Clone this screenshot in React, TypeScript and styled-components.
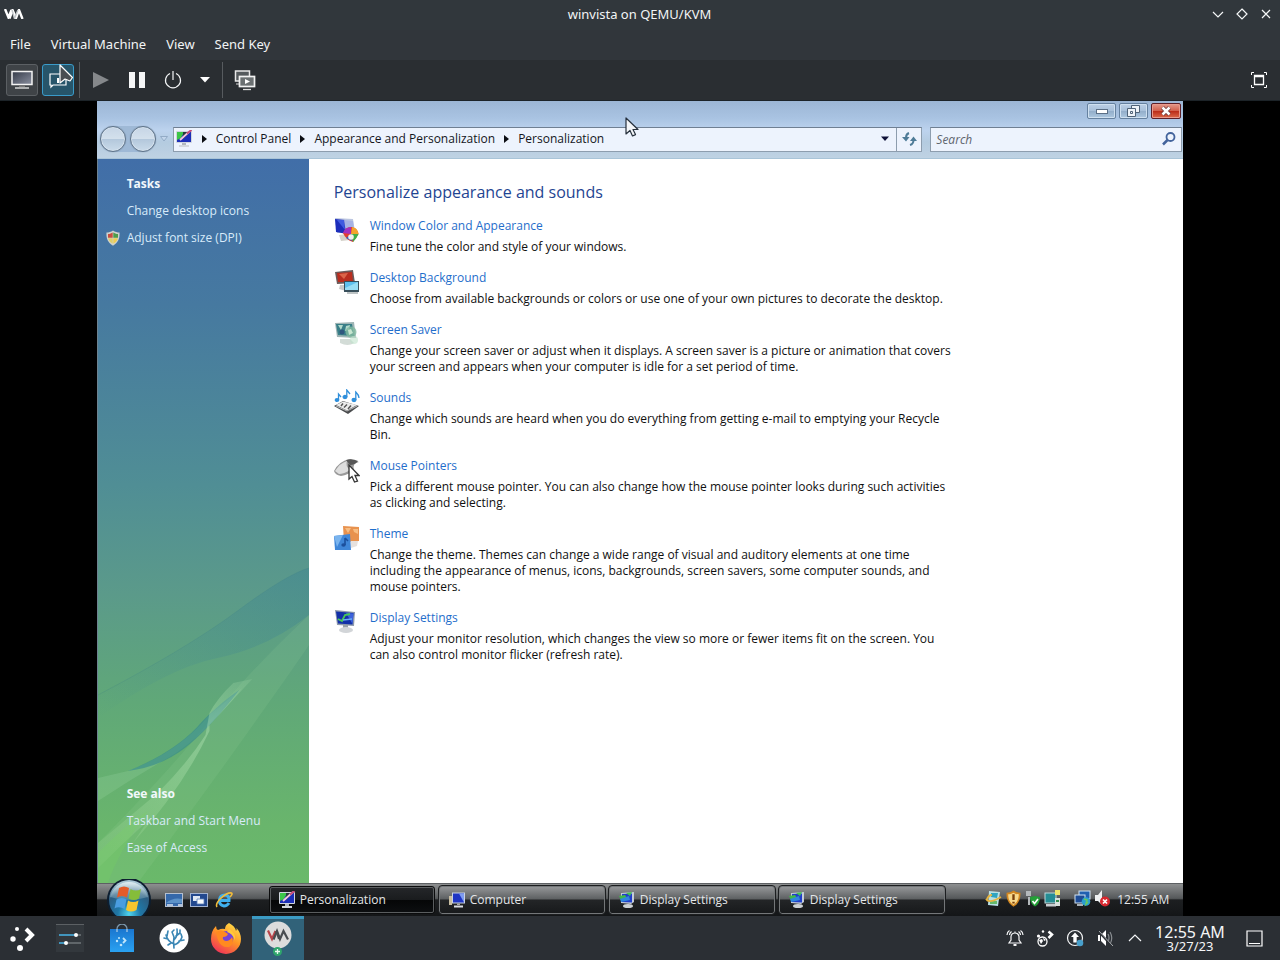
import React from 'react';
import styled, { createGlobalStyle } from 'styled-components';

const GlobalStyle = createGlobalStyle`
    * {
        box-sizing: border-box;
    }
    body {
        margin: 0;
        background: #000;
        font-family: "Noto Sans", sans-serif;
    }
    button, input {
        font: inherit;
        color: inherit;
        border: 0;
        padding: 0;
        margin: 0;
        background: none;
    }
    a {
        color: inherit;
        text-decoration: none;
    }
    svg {
        display: block;
        flex: none;
    }
`;

const Desktop = styled.div`
    display: flex;
    flex-direction: column;
    height: 100vh;
    overflow: hidden;
`;

/* ---------- host window ---------- */

const HostTitle = styled.header`
    position: relative;
    display: flex;
    align-items: center;
    justify-content: space-between;
    flex: none;
    height: 30px;
    padding: 0 7px 2px 4px;
    background: #31373c;
    color: #f2f4f5;
    font-size: 13px;
`;

const HostName = styled.h1`
    margin: 0;
    font-size: 13px;
    font-weight: 400;
    line-height: 20px;
`;

const HostControls = styled.div`
    display: flex;
    gap: 10px;
`;

const LogoArea = styled.div`
    width: 64px;
`;

const MenuBar = styled.nav`
    display: flex;
    align-items: center;
    flex: none;
    gap: 20px;
    height: 30px;
    padding: 0 10px 2px;
    background: #31363b;
    color: #f2f4f5;
    font-size: 13px;
`;

const ToolBar = styled.div`
    position: relative;
    display: flex;
    align-items: center;
    flex: none;
    height: 41px;
    padding: 0 6px;
    background: #2a2e32;
    border-bottom: 1px solid #1c2328;
`;

const ToolButton = styled.button<{ $look?: 'framed' | 'active'; $width?: number }>`
    display: flex;
    align-items: center;
    justify-content: center;
    width: ${p => p.$width || 32}px;
    height: 32px;
    margin-right: ${p => (p.$look ? 4 : 0)}px;
    border-radius: 3px;
    border: 1px solid ${p => (p.$look === 'active' ? '#3a9bc9' : p.$look ? '#5c6064' : 'transparent')};
    background: ${p => (p.$look === 'active' ? '#27556a' : p.$look ? '#3f4347' : 'transparent')};
`;

const Separator = styled.span`
    width: 1px;
    height: 36px;
    margin: 0 5px 0 1px;
    background: #575b5f;
`;

const Spacer = styled.div`
    flex: 1;
`;

const Pointer = styled.svg<{ $x: number; $y: number }>`
    position: absolute;
    left: ${p => p.$x}px;
    top: ${p => p.$y}px;
    z-index: 5;
    pointer-events: none;
`;

const Viewer = styled.main`
    display: flex;
    justify-content: center;
    flex: 1;
    min-height: 0;
    background: #000;
`;

/* ---------- guest ---------- */

const Guest = styled.div`
    display: flex;
    flex-direction: column;
    height: 100%;
    aspect-ratio: 4 / 3;
    font-family: "Open Sans", "Noto Sans", sans-serif;
    font-size: 12px;
    background: #fff;
`;

const Chrome = styled.header`
    position: relative;
    flex: none;
    background: linear-gradient(#9cb6d5, #a9c3e2 30%, #bdd3ee 52%, #b4cbe0 72%, #bfd2e3);
    border-bottom: 1px solid #a9c4d8;
`;

const Caption = styled.div`
    display: flex;
    justify-content: flex-end;
    gap: 3px;
    height: 19px;
    padding: 2px 2px 0 0;
`;

const CaptionButton = styled.button<{ $close?: boolean }>`
    display: flex;
    align-items: center;
    justify-content: center;
    width: ${p => (p.$close ? 30 : 29)}px;
    height: 16px;
    border: 1px solid ${p => (p.$close ? '#5d2028' : '#65819f')};
    border-radius: 2px;
    box-shadow: inset 0 0 0 1px ${p => (p.$close ? '#e99a8c' : '#cfe0f0')};
    background: ${p => (p.$close
        ? 'linear-gradient(#e29a8c, #d2604c 48%, #bb2c18 52%, #dc6a4a)'
        : 'linear-gradient(#bcd0e6, #a8c0da 48%, #93aeca 52%, #adc8e0)')};
`;

const NavRow = styled.div`
    display: flex;
    align-items: center;
    height: 38px;
    padding: 0 1px 0 3px;
`;

const NavPair = styled.div`
    display: flex;
    gap: 4px;
    border-radius: 13px;
    background: #9fb9d6;
`;

const RoundButton = styled.button`
    width: 26px;
    height: 26px;
    border: 1px solid #5f7388;
    border-radius: 50%;
    box-shadow: inset 0 0 0 1px #d6e2ee, 0 0 1px #6d8299;
    background: linear-gradient(#c6d5e6, #d3e0ec 48%, #b4c8dc 52%, #cadbea);
`;

const HistoryButton = styled.button`
    display: flex;
    justify-content: center;
    width: 17px;
`;

const MenuButton = styled(HistoryButton)`
    width: 22px;
`;

const AddressBar = styled.div`
    display: flex;
    align-items: center;
    flex: 1;
    height: 25px;
    border: 1px solid #8d9dae;
    border-top-color: #6f7f92;
    background: #edf3fd;
    padding-left: 1px;
`;

const Crumb = styled.a`
    display: flex;
    align-items: center;
    gap: 9px;
    margin-left: 9px;
    line-height: 20px;
    color: #14161c;
    white-space: nowrap;
`;

const RefreshButton = styled.button`
    display: flex;
    align-items: center;
    justify-content: center;
    width: 25px;
    height: 23px;
    border-left: 1px solid #8d9dae;
`;

const SearchBox = styled.label`
    display: flex;
    align-items: center;
    width: 252px;
    height: 25px;
    margin-left: 8px;
    padding: 0 5px;
    border: 1px solid #8d9dae;
    border-top-color: #6f7f92;
    background: #edf3fd;
`;

const SearchInput = styled.input`
    flex: 1;
    min-width: 0;
    outline: none;
    &::placeholder {
        color: #5f656e;
        font-style: italic;
        opacity: 1;
    }
`;

const Body = styled.div`
    display: flex;
    flex: 1;
    min-height: 0;
`;

const Sidebar = styled.aside`
    position: relative;
    display: flex;
    flex-direction: column;
    justify-content: space-between;
    flex: none;
    width: 212px;
    padding: 11px 8px 22px 7px;
    border-left: 1px solid #6d8290;
    background: linear-gradient(#416ea8, #4679a0 20%, #508e95 45%, #5b9a8a 60%, #60a878 75%, #69b56c 92%, #6ab96a);
    color: #d8ebfa;
`;

const Swoosh = styled.svg`
    position: absolute;
    left: 0;
    bottom: 0;
    width: 100%;
    height: 330px;
`;

const LinkGroup = styled.nav`
    position: relative;
    display: flex;
    flex-direction: column;
`;

const SideTitle = styled.h2`
    margin: 0;
    padding-left: 22px;
    font-size: 12px;
    font-weight: 700;
    line-height: 27px;
    color: #f2f8fc;
`;

const SideLink = styled.a`
    display: flex;
    align-items: center;
    gap: 6px;
    line-height: 27px;
`;

const IconSlot = styled.span`
    display: flex;
    width: 16px;
`;

const Content = styled.section`
    flex: 1;
    min-width: 0;
    padding: 21px 25px;
    background: #fff;
`;

const Heading = styled.h2`
    margin: 0 0 9px;
    font-size: 16px;
    font-weight: 400;
    line-height: 24px;
    color: #1f4592;
`;

const Entry = styled.article`
    display: flex;
    align-items: flex-start;
    gap: 10px;
    max-width: 618px;
    margin-bottom: 10px;
    > svg {
        margin-top: 4px;
    }
`;

const EntryTitle = styled.a`
    display: block;
    line-height: 26px;
    color: #1f6ecb;
`;

const EntryText = styled.p`
    margin: 0;
    line-height: 16px;
    color: #101010;
`;

const GuestBar = styled.footer`
    position: relative;
    display: flex;
    align-items: center;
    flex: none;
    height: 33px;
    padding: 0 14px 0 8px;
    border-top: 1px solid #5d6063;
    background: linear-gradient(#8d8f90, #55585a 45%, #1d1f21 50%, #141618);
    color: #e4e6e8;
`;

const StartButton = styled.button`
    align-self: flex-end;
    flex: none;
    width: 48px;
    height: 37px;
    overflow: hidden;
`;

const QuickLaunch = styled.div`
    display: flex;
    gap: 7px;
    width: 104px;
    margin-left: 12px;
`;

const TaskList = styled.div`
    display: flex;
    gap: 4px;
`;

const TaskButton = styled.button<{ $active?: boolean }>`
    display: flex;
    align-items: center;
    gap: 4px;
    width: 166px;
    height: 28px;
    padding-left: 8px;
    border: 1px solid ${p => (p.$active ? '#0b0c0d' : '#747779')};
    outline: 1px solid ${p => (p.$active ? '#5a5d5f' : '#1c1e20')};
    outline-offset: ${p => (p.$active ? -2 : 0)}px;
    border-radius: 3px;
    background: ${p => (p.$active
        ? 'linear-gradient(#25272a, #1a1c1e 48%, #050607 52%, #0d0f11)'
        : 'linear-gradient(#939597, #5d6062 46%, #232527 50%, #181a1c)')};
    line-height: 20px;
`;

const GuestTray = styled.div`
    display: flex;
    align-items: center;
    gap: 3px;
    margin-left: auto;
    > svg {
        margin-bottom: 3px;
    }
`;

const Gap = styled.span`
    width: 7px;
`;

const GuestClock = styled.time`
    margin-left: 3px;
    line-height: 20px;
`;

/* ---------- host panel ---------- */

const Panel = styled.footer`
    display: flex;
    align-items: stretch;
    flex: none;
    height: 44px;
    padding-right: 11px;
    background: #2b2f34;
    color: #f5f6f7;
`;

const Launcher = styled.button<{ $width?: number; $active?: boolean }>`
    display: flex;
    align-items: center;
    justify-content: center;
    flex: none;
    width: ${p => p.$width || 52}px;
    box-shadow: inset 0 3px ${p => (p.$active ? '#3b9bc4' : 'transparent')};
    background: ${p => (p.$active ? '#316279' : 'transparent')};
`;

const TrayButton = styled.button`
    display: flex;
    align-items: center;
    justify-content: center;
    width: 30px;
`;

const PanelClock = styled.time`
    display: flex;
    flex-direction: column;
    align-items: center;
    justify-content: center;
    width: 80px;
    margin-right: 9px;
    font-size: 16px;
    line-height: 16px;
    small {
        font-size: 13px;
        line-height: 12px;
    }
`;

/* ---------- icons ---------- */

const Arrow = ({ x, y, dark }: { x: number; y: number; dark?: boolean }) => (
    <Pointer $x={x} $y={y} width="16" height="22" viewBox="0 0 16 22">
        <path
            d={dark ? 'M2 1V19L7 15L12 17L14.500 13.500Z' : 'M1 1V17L5 13.500L7.500 19L10.500 17.600L8 12.500H13Z'}
            fill={dark ? '#4a4e52' : '#f4f6f9'}
            stroke={dark ? '#fff' : '#26303c'}
            strokeWidth="1.200"
            strokeLinejoin="round"
        />
    </Pointer>
);

const VmmMark = ({ width, red }: { width: number; red?: boolean }) => (
    <svg width={width} height={width / 2} viewBox="0 0 20 10" fill="none" strokeWidth="2.400">
        <path d="M1 0L4.500 8.500L7.500 1" stroke={red ? '#b8434a' : '#fff'} />
        <path d="M5.500 9.500L8.500 1L12 9L15 1L18.500 10" stroke={red ? '#4b4f52' : '#fff'} />
        <path d="M8 1L10.500 9.500L14 1" stroke={red ? '#4b4f52' : '#c4c9cc'} strokeWidth="1.500" />
    </svg>
);

const Stroke = ({ d, size = 14, box = 14 }: { d: string; size?: number; box?: number }) => (
    <svg width={size} height={size} viewBox={`0 0 ${box} ${box}`} fill="none" stroke="#f5f7f8" strokeWidth="1.200">
        <path d={d} />
    </svg>
);

const ConsoleIcon = () => (
    <svg width="22" height="20" viewBox="0 0 22 20">
        <defs>
            <linearGradient id="con" x1="0" y1="0" x2="1" y2="1">
                <stop offset="0" stopColor="#343a48" />
                <stop offset="1" stopColor="#8b90a0" />
            </linearGradient>
        </defs>
        <rect x="1" y="1.500" width="20" height="13" fill="url(#con)" stroke="#f3f3f3" strokeWidth="1.500" />
        <path d="M8 15.500H14V17H8Z" fill="#777" />
        <path d="M4 18H18" stroke="#d4d4d4" strokeWidth="1.500" />
    </svg>
);

const DetailsIcon = () => (
    <svg width="20" height="18" viewBox="0 0 20 18" fill="none" stroke="#fff" strokeWidth="1.200">
        <path d="M2 3H18V14H5L3 16V14H2Z" />
        <path d="M10 7V12" strokeWidth="2" />
    </svg>
);

const ScreensIcon = () => (
    <svg width="22" height="22" viewBox="0 0 22 22">
        <rect x="1.500" y="2" width="14" height="10" fill="#555a5d" stroke="#e8e8e8" strokeWidth="1.500" />
        <path d="M2 15H5" stroke="#ddd" />
        <rect x="5.500" y="7.500" width="15" height="10" fill="#6b7072" stroke="#f2f2f2" strokeWidth="1.700" />
        <path d="M11 10L16 12.500L11 15Z" fill="#fff" />
        <path d="M9 20.500H17" stroke="#ddd" strokeWidth="1.300" />
    </svg>
);

const Shield = ({ kind = 'uac', size = 16 }: { kind?: 'uac' | 'warn'; size?: number }) => (
    <svg width={size} height={size} viewBox="0 0 16 16">
        <path d="M8 .500C10 2 12.500 2.500 14.500 2.500C15 8 13 13 8 15.700C3 13 1 8 1.500 2.500C3.500 2.500 6 2 8 .500Z" fill={kind === 'warn' ? '#d3861f' : '#cfd2cd'} />
        {kind === 'warn' ? (
            <>
                <path d="M8 2.500C10 3.700 11.500 4 13 4C13 8.500 11.500 12 8 14C4.500 12 3 8.500 3 4C4.500 4 6 3.700 8 2.500Z" fill="#f8d98c" />
                <path d="M8 4V9.500M8 11V12.700" stroke="#7a3d08" strokeWidth="2.200" />
            </>
        ) : (
            <>
                <path d="M7.700 2.500V7.700H3L3 4C5 4 6.500 3.300 7.700 2.500Z" fill="#c84d3e" />
                <path d="M8.300 2.500V7.700H13L13 4C11 4 9.500 3.300 8.300 2.500Z" fill="#4f9c4a" />
                <path d="M7.700 8.300V13.700C5 12.500 3.500 10.500 3.200 8.300Z" fill="#e0cf6a" />
                <path d="M8.300 8.300V13.700C11 12.500 12.500 10.500 12.800 8.300Z" fill="#f0ce52" />
            </>
        )}
    </svg>
);

const PersonalizeIcon = ({ size = 18 }: { size?: number }) => (
    <svg width={size} height={size} viewBox="0 0 18 18">
        <rect x="1" y="1" width="16" height="12" rx="1" fill="#cfd5de" />
        <rect x="2" y="2" width="14" height="10" fill="#1c2fb8" />
        <path d="M2 2H9L6 8L2 10Z" fill="#3cc648" />
        <path d="M8 2H15L8 9Z" fill="#253a3a" />
        <path d="M5 10L15 1" stroke="#f4c4e0" strokeWidth="1.800" />
        <path d="M12 3.500L16.500 0" stroke="#c44a78" strokeWidth="2" />
        <path d="M7 13H11V15H7Z" fill="#b0b6be" />
        <path d="M4 16H14" stroke="#d3d8de" strokeWidth="2" />
    </svg>
);

const ComputerIcon = () => (
    <svg width="18" height="18" viewBox="0 0 18 18">
        <path d="M1 5H4V14H1Z" fill="#c9bea2" />
        <rect x="4" y="1.500" width="13" height="11" fill="#c9d3e4" />
        <rect x="5" y="2.500" width="11" height="9" fill="#1f35c4" />
        <path d="M11 2.500H16V11.500Z" fill="#7f9cf0" />
        <path d="M9 12.500H12V14H9Z" fill="#aaa" />
        <path d="M6 15.500H15" stroke="#dcdfe4" strokeWidth="2" />
    </svg>
);

const DisplayIcon = ({ size = 18 }: { size?: number }) => (
    <svg width={size} height={size} viewBox="0 0 18 18">
        <path d="M3 2L16 1V11L13 13L3 12Z" fill="#c4ccd8" />
        <path d="M4 3L14 2.500V11.500L4 11Z" fill="#203fc9" />
        <path d="M1 5L7 4L9 7L3 9Z" fill="#3eb84a" />
        <path d="M2 8L11 5L12 9L3 11Z" fill="#2f87dc" />
        <path d="M8 2L14 1L12 5Z" fill="#45c253" />
        <ellipse cx="10" cy="15" rx="5" ry="2" fill="#ced3d6" />
    </svg>
);

const StartOrb = () => (
    <svg width="48" height="37" viewBox="0 0 48 37">
        <defs>
            <radialGradient id="orb" cx=".5" cy=".85" r=".8">
                <stop offset="0" stopColor="#4fd6f0" />
                <stop offset=".35" stopColor="#1f78a8" />
                <stop offset=".75" stopColor="#2c5c80" />
                <stop offset="1" stopColor="#a8c6d4" />
            </radialGradient>
            <linearGradient id="gloss" x1="0" y1="0" x2="0" y2="1">
                <stop offset="0" stopColor="#e2eef2" />
                <stop offset="1" stopColor="#8db2c2" stopOpacity=".3" />
            </linearGradient>
        </defs>
        <circle cx="24" cy="21" r="22" fill="#0d1e30" />
        <circle cx="24" cy="21" r="20" fill="url(#orb)" />
        <path d="M5 18A19.500 19.500 0 0 1 43 18Q24 24 5 18Z" fill="url(#gloss)" />
        <path d="M14 9Q19 6 24 9L22 18.500Q17 15.500 12 18.500Z" fill="#e45b28" />
        <path d="M25.500 10Q31 13 36 10L34 19.500Q29 22.500 23.500 19.500Z" fill="#85bd3a" />
        <path d="M11.500 20.500Q17 17.500 21.500 20.500L19.500 30Q14 27 9.500 29.500Z" fill="#4a9de0" />
        <path d="M23 21.500Q28 24.500 33.500 21.500L31.500 31Q26 34 21 31Z" fill="#f7c52f" />
    </svg>
);

const ShowDesktopIcon = () => (
    <svg width="18" height="16" viewBox="0 0 18 16">
        <rect x=".5" y="1.500" width="17" height="13" fill="#3568aa" stroke="#b4bfd0" />
        <path d="M1 11Q8 5 17 7V11H1Z" fill="#5c92c8" />
        <path d="M2 13H8M13 13H17" stroke="#dbe4ee" strokeWidth="1.500" />
    </svg>
);

const SwitchIcon = () => (
    <svg width="18" height="16" viewBox="0 0 18 16">
        <rect x=".5" y="1.500" width="17" height="13" fill="#23498f" stroke="#a3b3d0" />
        <path d="M3 4H10V9H3Z" fill="#dfe8f4" />
        <path d="M7 7H14V12H7Z" fill="#f7fafc" stroke="#5b7db8" strokeWidth=".8" />
    </svg>
);

const ExplorerIcon = () => (
    <svg width="18" height="18" viewBox="0 0 18 18" fill="none">
        <path d="M14 12Q12 15 9 15Q4 14 4.500 9Q5 4 10 4Q14.500 4.500 14 9.500H6" stroke="#3fb0ee" strokeWidth="3" />
        <path d="M2 16Q0 13 6 7Q13 1 16.500 2Q18 3 15 6" stroke="#f2bd3a" strokeWidth="1.600" />
    </svg>
);

const GuestTrayIcons = () => (
    <>
        <svg width="17" height="17" viewBox="0 0 17 17">
            <path d="M4 1L15 2L13 16L3 15Z" fill="#b9e0e4" />
            <path d="M6 3H13L12 8L6 7Z" fill="#2fa4c0" />
            <path d="M5 11H12V14H5Z" fill="#64b96c" />
            <path d="M1 9Q4 14 16 7M2 9Q4 5 7 5" stroke="#e6b440" strokeWidth="1.800" fill="none" />
        </svg>
        <Shield kind="warn" size={17} />
        <svg width="16" height="17" viewBox="0 0 16 17">
            <path d="M1 1H6V6H1ZM3 7H5V15H3Z" fill="#b4b9bb" />
            <path d="M5 7L10 6L15 7Q15 14 10 16.500Q5 14 5 7Z" fill="#25a038" />
            <path d="M7.500 11L9.500 13.500L13 9" stroke="#fff" strokeWidth="1.600" fill="none" />
        </svg>
        <svg width="17" height="17" viewBox="0 0 17 17">
            <rect x="1" y="3" width="11" height="10" fill="#268d94" stroke="#bfd8da" />
            <path d="M2 14H12V16.500H2Z" fill="#c9cdd0" />
            <path d="M11 0H16V5H11Z" fill="#efe66c" />
            <path d="M11 8H16V16H11Z" fill="#d8e0dc" />
            <path d="M12 10H15V12H12Z" fill="#338c48" />
        </svg>
        <Gap />
        <svg width="17" height="17" viewBox="0 0 17 17">
            <rect x="5" y="1" width="11" height="8" fill="#2160b0" stroke="#cfe2f2" />
            <rect x="1" y="5" width="10" height="8" fill="#1d4c96" stroke="#cfe2f2" />
            <path d="M3 15H9" stroke="#dbe3ea" strokeWidth="1.500" />
            <circle cx="12" cy="11.500" r="4.300" fill="#2b9fd0" />
            <path d="M10 9L13 10L12 14L14 12" stroke="#69c95c" strokeWidth="1.500" fill="none" />
        </svg>
        <svg width="17" height="17" viewBox="0 0 17 17">
            <path d="M1 5H4L8 0V15L4 11H1Z" fill="#eef0f1" />
            <circle cx="11" cy="11.500" r="5" fill="#d8272e" />
            <path d="M9 9.500L13 13.500M13 9.500L9 13.500" stroke="#fff" strokeWidth="1.700" />
        </svg>
    </>
);

const WindowColorIcon = () => (
    <svg width="26" height="26" viewBox="0 0 26 26">
        <path d="M1 1L19 2L21 15L3 16Z" fill="#bcc6e0" />
        <path d="M1 2L11 3L13 17L2 15Z" fill="#1c2dbb" />
        <path d="M3 3L10 3L11 13Z" fill="#3f5ae0" />
        <path d="M10 3L19 4L20 14L12 16Z" fill="#a6b2e4" />
        <path d="M5 18L13 17L16 23L7 24Z" fill="#d4d2ca" />
        <path d="M9 16Q12 9 18 10Q24 12 24.500 17Q22 21 19 25Q12 23 9 16Z" fill="#e23d30" />
        <path d="M17 17L9 16Q11 10 17 10Z" fill="#a12fc0" />
        <path d="M17 17L18 10Q24 11 24.500 17Z" fill="#f3a42c" />
        <path d="M17 17H24.500Q23 21 19 25Z" fill="#3fae4a" />
        <path d="M17 17L18 24L12 21Z" fill="#2f60cc" />
        <circle cx="17" cy="20" r="2.800" fill="#f0efec" />
    </svg>
);

const BackgroundIcon = () => (
    <svg width="26" height="26" viewBox="0 0 26 26">
        <path d="M1 3L19 1L21 14L3 15Z" fill="#6b5a5a" />
        <path d="M3 4L18 3L19 13L4 13Z" fill="#b92d1f" />
        <path d="M5 5L14 4L10 10Z" fill="#dc6448" />
        <path d="M6 16H12V22L5 20Z" fill="#c9c9c9" />
        <rect x="10" y="12" width="15" height="11" fill="#39505c" />
        <rect x="11" y="13" width="13" height="8" fill="#5fc0ee" />
        <path d="M11 19L24 13V21H11Z" fill="#99def6" />
        <path d="M13 24H24" stroke="#a9b0b2" strokeWidth="1.500" />
    </svg>
);

const SaverIcon = () => (
    <svg width="26" height="26" viewBox="0 0 26 26">
        <path d="M1 2L20 1L22 17L3 16Z" fill="#9eb4b4" />
        <path d="M2 3L18 3L20 15L4 14Z" fill="#397f88" />
        <path d="M4 4L9 4L7 9ZM12 5L16 4L15 9L11 10Z" fill="#b3dacb" />
        <circle cx="8" cy="11" r="2.500" fill="#2f567e" />
        <circle cx="17" cy="11" r="5.500" fill="#82baa0" opacity=".8" />
        <path d="M14 9L17 8L19 12L15 14Z" fill="#c7e6d0" />
        <path d="M6 18L16 18L20 22Q14 26 6 22Z" fill="#d3dcd7" />
        <circle cx="20" cy="19" r="4" fill="#bfe2cb" opacity=".6" />
    </svg>
);

const SoundsIcon = () => (
    <svg width="26" height="26" viewBox="0 0 26 26">
        <path d="M0 17L9 12L25 17L14 25Z" fill="#4a4c4e" />
        <path d="M2 16L9 12.500L23 16L13 21.500Z" fill="#ececec" />
        <path d="M9 14.500L7 17M13 15.500L10 18.500M17 16.500L14 20" stroke="#565656" strokeWidth="1.500" />
        <path d="M2 17L13 22L23 17" stroke="#bbb" fill="none" />
        <g fill="#2f8fdb" stroke="#2f8fdb" strokeWidth="1.300">
            <ellipse cx="3" cy="11" rx="1.700" ry="1.300" />
            <path d="M4.500 11V5L7 8" fill="none" />
            <ellipse cx="11" cy="8" rx="1.900" ry="1.500" />
            <path d="M12.800 8V1L16 5" fill="none" />
            <ellipse cx="20" cy="11" rx="1.900" ry="1.500" />
            <path d="M21.800 11V3Q25 6 25 9" fill="none" />
        </g>
    </svg>
);

const MouseIcon = () => (
    <svg width="26" height="26" viewBox="0 0 26 26">
        <path d="M0 14Q5 4 16 2L25 5Q18 6 20 13Q14 18 7 19Q1 18 0 14Z" fill="#9a9a9a" />
        <path d="M1 14Q6 6 13 4Q11 9 16 13Q10 17 5 17Z" fill="#dedede" />
        <path d="M12 3Q18 1 24 4Q21 8 16 8Z" fill="#575757" />
        <path d="M15 8V22L18 19.500L20.500 25L23.500 24L21 18.500H25Z" fill="#fff" stroke="#343434" strokeWidth="1.300" />
    </svg>
);

const ThemeIcon = () => (
    <svg width="26" height="26" viewBox="0 0 26 26">
        <path d="M9 1L25 2V16L10 17Z" fill="#e8924e" />
        <path d="M11 3L17 3L14 8ZM19 4H24V9L20 7Z" fill="#f7bd82" />
        <path d="M0 11L16 9L17 25L1 25Z" fill="#3f86d8" />
        <path d="M0 11L9 10L3 22Z" fill="#7ab4ee" />
        <path d="M11 13V20M11 13L14 16" stroke="#1c4f9c" strokeWidth="1.600" />
        <ellipse cx="9.500" cy="20" rx="2.200" ry="1.700" fill="#1c4f9c" />
        <path d="M17 16L24 16L23 21L17 23Z" fill="#e6e1de" />
    </svg>
);

const SettingsIcon = () => (
    <svg width="26" height="26" viewBox="0 0 26 26">
        <path d="M1 1L21 3L20 17L3 16Z" fill="#8d99ac" />
        <path d="M2 2.500L19.500 4L18.500 15.500L4 14.500Z" fill="#1230a8" />
        <path d="M12 4L19.500 4.500L18.500 15Z" fill="#3c62dc" />
        <path d="M4 10L8 12L11 6L16 5" stroke="#47c656" strokeWidth="1.800" fill="none" />
        <path d="M9 11L18 10" stroke="#68aef4" strokeWidth="1.500" />
        <path d="M9 16H14V20H9Z" fill="#9aa2aa" />
        <ellipse cx="12" cy="21" rx="7" ry="3" fill="#d2d5d8" />
    </svg>
);

const TriRight = () => (
    <svg width="5" height="8" viewBox="0 0 5 8"><path d="M0 0L5 4L0 8Z" fill="#0c0e14" /></svg>
);

const TriDown = ({ color = '#fff', size = 10 }: { color?: string; size?: number }) => (
    <svg width={size} height="6" viewBox="0 0 10 6"><path d="M0 0H10L5 5.500Z" fill={color} /></svg>
);

const LauncherIcon = () => (
    <svg width="28" height="28" viewBox="0 0 28 28">
        <g fill="#fff">
            <circle cx="9" cy="5" r="2" />
            <circle cx="5" cy="15" r="2.700" />
            <circle cx="12" cy="24" r="3" />
        </g>
        <path d="M18 5L24 11L18 17" fill="none" stroke="#fff" strokeWidth="4" />
    </svg>
);

const SlidersIcon = () => (
    <svg width="28" height="28" viewBox="0 0 28 28">
        <rect width="28" height="28" fill="#33383d" />
        <path d="M0 .500H28" stroke="#5c6064" />
        <path d="M3 11H20M3 19H10" stroke="#48b4e8" strokeWidth="1.600" />
        <path d="M20 11H25M10 19H25" stroke="#70757a" strokeWidth="1.600" />
        <circle cx="20" cy="11" r="2" fill="#fff" />
        <circle cx="10" cy="19" r="2" fill="#fff" />
    </svg>
);

const BagIcon = () => (
    <svg width="26" height="28" viewBox="0 0 26 28">
        <defs>
            <linearGradient id="bag" x1="0" y1="0" x2="0" y2="1">
                <stop offset="0" stopColor="#1a76cf" />
                <stop offset="1" stopColor="#2aa2f2" />
            </linearGradient>
        </defs>
        <path d="M8 8V5A5 5 0 0 1 18 5V8" stroke="#7b97ac" strokeWidth="1.300" fill="none" />
        <path d="M1 5H25V28H1Z" fill="url(#bag)" />
        <path d="M8 8V5M18 8V5" stroke="#a9c8e0" strokeWidth="1.300" />
        <g fill="#bfe6fb">
            <circle cx="10" cy="14" r="1" />
            <circle cx="8" cy="17" r="1.200" />
            <circle cx="12" cy="21" r="1.300" />
        </g>
        <path d="M14 14L16.500 16.500L14 19" stroke="#bfe6fb" strokeWidth="1.800" fill="none" />
    </svg>
);

const CoralIcon = () => (
    <svg width="30" height="30" viewBox="0 0 30 30">
        <circle cx="15" cy="15" r="14.500" fill="#fff" />
        <g fill="none" stroke="#3a86b4" strokeWidth="1.600" strokeLinecap="round">
            <path d="M15 25Q14 19 15 14L13 9M15 17Q19 13 18 6M15 21Q9 19 7 12M9 16L5 15M8 13L9 8M17 13L21 10V7M15 22Q21 20 23 14L22 11M20 18L25 17M12 20L9 22M13 9L15 7" />
        </g>
    </svg>
);

const FirefoxIcon = () => (
    <svg width="32" height="32" viewBox="0 0 32 32">
        <defs>
            <linearGradient id="fox" x1=".8" y1="0" x2=".2" y2="1">
                <stop offset="0" stopColor="#ffe14a" />
                <stop offset=".45" stopColor="#ff9526" />
                <stop offset="1" stopColor="#ee2b5c" />
            </linearGradient>
        </defs>
        <path d="M19 1Q25 4 26 9Q27 8 26.500 6Q31 11 31 17A15 15 0 0 1 1 17Q1 9 6 4Q6 7 8 8Q12 6 15 7Q15 3 19 1Z" fill="url(#fox)" />
        <circle cx="16.500" cy="16" r="7" fill="#7543d6" />
        <path d="M6 10Q11 7 15 10L18 12Q17 15 13 15Q12 18 16 19Q20 19 22 15Q25 22 19 25Q11 26 8 18Z" fill="#ff8a20" />
        <path d="M19 7Q26 11 25 18Q22 11 17 10Z" fill="#ffc93a" />
    </svg>
);

const VmmIcon = () => (
    <svg width="30" height="38" viewBox="0 0 30 38">
        <circle cx="15" cy="16" r="13.500" fill="#dcdcdc" />
        <g fill="none" strokeWidth="2.200">
            <path d="M5 11.500L9 20L12.500 12" stroke="#b8444a" />
            <path d="M10.500 20.500L14 12L17 20L20.500 12L25 20.500" stroke="#484c50" />
            <path d="M13.500 12L16 20" stroke="#484c50" />
        </g>
        <circle cx="14.500" cy="32.500" r="4.500" fill="#2fa66c" />
        <path d="M12 32.500H17M14.500 30V35" stroke="#e9f7ef" strokeWidth="1.300" />
    </svg>
);

const BellIcon = () => (
    <svg width="18" height="18" viewBox="0 0 18 18" fill="none" stroke="#f5f6f7" strokeWidth="1.200">
        <path d="M3 14H15L13 11V7.500Q12.500 4 9 4Q5.500 4 5 7.500V11ZM9 4V2.500" />
        <path d="M7.500 16H10.500" strokeWidth="2" />
        <path d="M3.500 1.500Q1 3 1 6M5.500 2.500Q3.500 4 3.500 6M14.500 1.500Q17 3 17 6M12.500 2.500Q14.500 4 14.500 6" />
    </svg>
);

const GlobeIcon = () => (
    <svg width="18" height="18" viewBox="0 0 18 18">
        <g fill="#fff">
            <circle cx="7" cy="2.500" r="1.200" />
            <circle cx="2.500" cy="7" r="1.600" />
        </g>
        <path d="M12.500 2.500L16 5.500L12.500 9" stroke="#fff" strokeWidth="2.500" fill="none" />
        <circle cx="6.500" cy="12.500" r="4.500" fill="none" stroke="#fff" strokeWidth="1.300" />
        <path d="M3 11L6 10L7 12L5 15ZM7 8.500L10 11L8 12Z" fill="#fff" />
    </svg>
);

const UpdateIcon = () => (
    <svg width="18" height="18" viewBox="0 0 18 18">
        <circle cx="9" cy="9" r="7.500" fill="none" stroke="#f5f6f7" strokeWidth="1.200" />
        <path d="M9 3.500L13 8H10.700V13.500H7.300V8H5Z" fill="#fff" />
        <circle cx="14" cy="14" r="3.300" fill="#48a0cc" />
    </svg>
);

const MuteIcon = () => (
    <svg width="18" height="18" viewBox="0 0 18 18" fill="none">
        <path d="M2 6V12H4V6Z" fill="#fff" />
        <path d="M5 6L10 1V17L5 12Z" fill="#fff" />
        <path d="M12 5Q14 9 12 13M14 3Q17.500 9 14 15" stroke="#888c90" strokeWidth="1.200" />
        <path d="M2 2L16 17" stroke="#2b2f34" strokeWidth="2" />
        <path d="M3 2L17 17" stroke="#a6a9ac" strokeWidth="1" />
    </svg>
);

/* ---------- data ---------- */

const entries = [
    { icon: <WindowColorIcon />, title: 'Window Color and Appearance', text: 'Fine tune the color and style of your windows.' },
    { icon: <BackgroundIcon />, title: 'Desktop Background', text: 'Choose from available backgrounds or colors or use one of your own pictures to decorate the desktop.' },
    { icon: <SaverIcon />, title: 'Screen Saver', text: 'Change your screen saver or adjust when it displays. A screen saver is a picture or animation that covers your screen and appears when your computer is idle for a set period of time.' },
    { icon: <SoundsIcon />, title: 'Sounds', text: 'Change which sounds are heard when you do everything from getting e-mail to emptying your Recycle Bin.' },
    { icon: <MouseIcon />, title: 'Mouse Pointers', text: 'Pick a different mouse pointer. You can also change how the mouse pointer looks during such activities as clicking and selecting.' },
    { icon: <ThemeIcon />, title: 'Theme', text: 'Change the theme. Themes can change a wide range of visual and auditory elements at one time including the appearance of menus, icons, backgrounds, screen savers, some computer sounds, and mouse pointers.' },
    { icon: <SettingsIcon />, title: 'Display Settings', text: 'Adjust your monitor resolution, which changes the view so more or fewer items fit on the screen. You can also control monitor flicker (refresh rate).' },
];

const crumbs = ['Control Panel', 'Appearance and Personalization', 'Personalization'];

const tasks = [
    { icon: <PersonalizeIcon />, label: 'Personalization', active: true },
    { icon: <ComputerIcon />, label: 'Computer' },
    { icon: <DisplayIcon />, label: 'Display Settings' },
    { icon: <DisplayIcon />, label: 'Display Settings' },
];

const HostWindow = () => (
    <>
        <HostTitle>
            <LogoArea><VmmMark width={20} /></LogoArea>
            <HostName>winvista on QEMU/KVM</HostName>
            <HostControls>
                <button aria-label="Minimize"><Stroke d="M2 5L7 10L12 5" /></button>
                <button aria-label="Maximize"><Stroke d="M7 2L12 7L7 12L2 7Z" /></button>
                <button aria-label="Close"><Stroke d="M3 3L11 11M11 3L3 11" /></button>
            </HostControls>
        </HostTitle>
        <MenuBar>
            {['File', 'Virtual Machine', 'View', 'Send Key'].map(name => <button key={name}>{name}</button>)}
        </MenuBar>
        <ToolBar>
            <ToolButton $look="framed" aria-label="Console"><ConsoleIcon /></ToolButton>
            <ToolButton $look="active" aria-label="Details"><DetailsIcon /></ToolButton>
            <Separator />
            <ToolButton aria-label="Run">
                <svg width="16" height="16" viewBox="0 0 16 16"><path d="M0 0L16 8L0 16Z" fill="#85888b" /></svg>
            </ToolButton>
            <ToolButton $width={40} aria-label="Pause">
                <svg width="16" height="16" viewBox="0 0 16 16"><path d="M0 0H6V16H0ZM10 0H16V16H10Z" fill="#f5f6f7" /></svg>
            </ToolButton>
            <ToolButton aria-label="Shut down">
                <Stroke size={18} box={18} d="M6 2.500A7.500 7.500 0 1 0 12 2.500M9 0V9" />
            </ToolButton>
            <ToolButton aria-label="Shut down options"><TriDown /></ToolButton>
            <Separator />
            <ToolButton $width={34} aria-label="Snapshots"><ScreensIcon /></ToolButton>
            <Spacer />
            <ToolButton $width={30} aria-label="Full screen">
                <svg width="16" height="16" viewBox="0 0 16 16" fill="none" stroke="#fff">
                    <path d="M.500 3V.500H3M13 .500H15.500V3M15.500 13V15.500H13M3 15.500H.500V13" />
                    <path d="M3.500 3.500H12.500V12.500H3.500ZM3 4.500H13" strokeWidth="1.300" />
                </svg>
            </ToolButton>
            <Arrow x={58} y={4} dark />
        </ToolBar>
    </>
);

const Explorer = () => (
    <>
        <Chrome>
            <Caption>
                <CaptionButton aria-label="Minimize window">
                    <svg width="12" height="6" viewBox="0 0 12 6"><rect x=".5" y="1.500" width="11" height="4" fill="#fff" stroke="#5b6f86" /></svg>
                </CaptionButton>
                <CaptionButton aria-label="Restore window">
                    <svg width="13" height="12" viewBox="0 0 13 12" fill="#eef3f8" stroke="#4f6378">
                        <path d="M4.500 .500H12.500V7.500H4.500Z" />
                        <path d="M.500 3.500H8.500V11.500H.500Z" />
                        <path d="M3.500 6.500H5.500V8.500H3.500Z" />
                    </svg>
                </CaptionButton>
                <CaptionButton $close aria-label="Close window">
                    <svg width="12" height="10" viewBox="0 0 12 10">
                        <path d="M2.500 1.500L9.500 8.500M9.500 1.500L2.500 8.500" stroke="#6b3a3a" strokeWidth="4" />
                        <path d="M2.500 1.500L9.500 8.500M9.500 1.500L2.500 8.500" stroke="#fff" strokeWidth="2.500" />
                    </svg>
                </CaptionButton>
            </Caption>
            <NavRow>
                <NavPair>
                    <RoundButton aria-label="Back" />
                    <RoundButton aria-label="Forward" />
                </NavPair>
                <HistoryButton aria-label="Recent pages">
                    <svg width="8" height="6" viewBox="0 0 8 6"><path d="M.500 .500H7.500L4 5Z" fill="#c3d6ec" stroke="#93abc6" /></svg>
                </HistoryButton>
                <AddressBar>
                    <PersonalizeIcon />
                    {crumbs.map(name => <Crumb href="#" key={name}><TriRight />{name}</Crumb>)}
                    <Spacer />
                    <MenuButton aria-label="Previous locations"><TriDown color="#0f1238" size={8} /></MenuButton>
                    <RefreshButton aria-label="Refresh">
                        <svg width="15" height="14" viewBox="0 0 15 14" fill="none" stroke="#4f7c98" strokeWidth="2">
                            <path d="M7 1Q4 2 4 6" />
                            <path d="M8 13Q11.500 12 11.500 8" />
                            <path d="M0 5H7.500L4 9.500ZM8 9H15L11.500 4.500Z" fill="#4f7c98" stroke="none" />
                        </svg>
                    </RefreshButton>
                </AddressBar>
                <SearchBox>
                    <SearchInput type="text" placeholder="Search" aria-label="Search" />
                    <svg width="14" height="14" viewBox="0 0 14 14" fill="none" stroke="#42639c">
                        <circle cx="8.500" cy="5" r="4" strokeWidth="1.800" />
                        <path d="M5.500 8L1 12.500" strokeWidth="2.500" />
                    </svg>
                </SearchBox>
            </NavRow>
            <Arrow x={528} y={16} />
        </Chrome>
        <Body>
            <Sidebar>
                <Swoosh viewBox="0 0 212 330" preserveAspectRatio="none">
                    <defs>
                        <linearGradient id="band" x1="0" y1="1" x2="1" y2="0">
                            <stop offset="0" stopColor="#3c8392" stopOpacity="0" />
                            <stop offset="1" stopColor="#3c8392" stopOpacity=".45" />
                        </linearGradient>
                        <linearGradient id="ray" x1="0" y1="1" x2="1" y2="0">
                            <stop offset="0" stopColor="#b4e6a8" stopOpacity=".1" />
                            <stop offset=".7" stopColor="#b8e8b8" stopOpacity=".4" />
                            <stop offset="1" stopColor="#b8e8b8" stopOpacity=".15" />
                        </linearGradient>
                    </defs>
                    <path d="M0 142Q90 95 140 58T212 15V62Q170 95 120 105T0 165Z" fill="url(#band)" />
                    <path d="M0 142Q90 95 140 58T212 15" stroke="#3a7c86" opacity=".2" fill="none" />
                    <path d="M212 62Q150 120 110 170T0 290V330H40Q100 250 150 180T212 92Z" fill="#9ad29a" opacity=".14" />
                    <path d="M30 218Q80 200 112 162L145 135Q105 185 70 205T0 248V225Z" fill="#a2dcae" opacity=".22" />
                    <path d="M30 218Q80 198 105 168Q125 148 142 137Q110 178 86 196T30 218Z" fill="#2d8590" opacity=".55" />
                    <path d="M112 172L155 126L136 130Q120 145 112 160L108 182Q90 210 60 240L0 290V315Q25 290 50 268L35 290Q85 235 112 178Z" fill="url(#ray)" />
                    <path d="M0 300Q30 270 50 258Q20 300 10 330H0Z" fill="#79d35e" opacity=".25" />
                </Swoosh>
                <LinkGroup aria-label="Tasks">
                    <SideTitle>Tasks</SideTitle>
                    <SideLink href="#"><IconSlot />Change desktop icons</SideLink>
                    <SideLink href="#"><IconSlot><Shield size={16} /></IconSlot>Adjust font size (DPI)</SideLink>
                </LinkGroup>
                <LinkGroup aria-label="See also">
                    <SideTitle>See also</SideTitle>
                    <SideLink href="#"><IconSlot />Taskbar and Start Menu</SideLink>
                    <SideLink href="#"><IconSlot />Ease of Access</SideLink>
                </LinkGroup>
            </Sidebar>
            <Content>
                <Heading>Personalize appearance and sounds</Heading>
                {entries.map(entry => (
                    <Entry key={entry.title}>
                        {entry.icon}
                        <div>
                            <EntryTitle href="#">{entry.title}</EntryTitle>
                            <EntryText>{entry.text}</EntryText>
                        </div>
                    </Entry>
                ))}
            </Content>
        </Body>
    </>
);

const App: React.FC = () => {
    return (
        <Desktop>
            <GlobalStyle />
            <HostWindow />
            <Viewer>
                <Guest>
                    <Explorer />
                    <GuestBar>
                        <StartButton aria-label="Start"><StartOrb /></StartButton>
                        <QuickLaunch>
                            <button aria-label="Show desktop"><ShowDesktopIcon /></button>
                            <button aria-label="Switch between windows"><SwitchIcon /></button>
                            <button aria-label="Internet Explorer"><ExplorerIcon /></button>
                        </QuickLaunch>
                        <TaskList>
                            {tasks.map((task, i) => (
                                <TaskButton key={i} $active={task.active}>{task.icon}{task.label}</TaskButton>
                            ))}
                        </TaskList>
                        <GuestTray>
                            <GuestTrayIcons />
                            <GuestClock>12:55 AM</GuestClock>
                        </GuestTray>
                    </GuestBar>
                </Guest>
            </Viewer>
            <Panel>
                <Launcher $width={44} aria-label="Application launcher"><LauncherIcon /></Launcher>
                <Launcher aria-label="System settings"><SlidersIcon /></Launcher>
                <Launcher aria-label="Discover"><BagIcon /></Launcher>
                <Launcher aria-label="Coral"><CoralIcon /></Launcher>
                <Launcher aria-label="Firefox"><FirefoxIcon /></Launcher>
                <Launcher $active aria-label="Virtual Machine Manager"><VmmIcon /></Launcher>
                <Spacer />
                <TrayButton aria-label="Notifications"><BellIcon /></TrayButton>
                <TrayButton aria-label="Network"><GlobeIcon /></TrayButton>
                <TrayButton aria-label="Updates"><UpdateIcon /></TrayButton>
                <TrayButton aria-label="Volume"><MuteIcon /></TrayButton>
                <TrayButton aria-label="Show hidden icons"><Stroke d="M1 10L7 4L13 10" /></TrayButton>
                <PanelClock>12:55 AM<small>3/27/23</small></PanelClock>
                <TrayButton aria-label="Show desktop">
                    <svg width="17" height="17" viewBox="0 0 17 17" fill="none" stroke="#fff" strokeWidth="1.200">
                        <path d="M1 1H16V16H1ZM3 13.500H14" />
                    </svg>
                </TrayButton>
            </Panel>
        </Desktop>
    );
};

export default App;
